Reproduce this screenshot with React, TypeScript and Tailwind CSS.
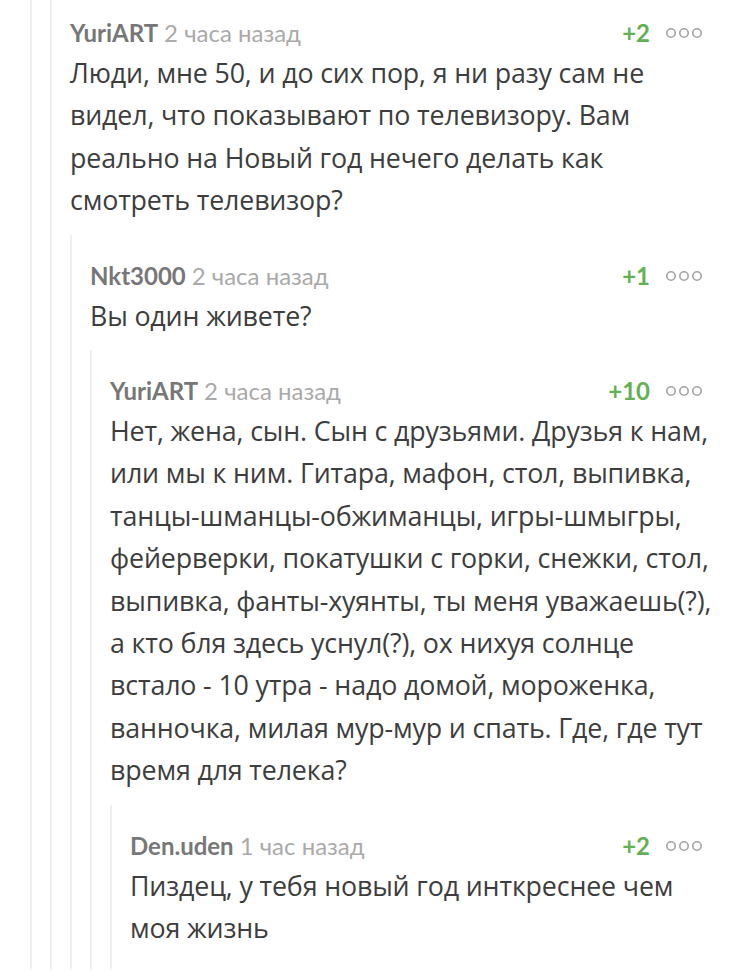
import React from "react";

interface CommentData {
    name: string;
    time: string;
    score: string;
    lines: string[];
    reply?: CommentData;
}

const thread: CommentData = {
    name: "YuriART",
    time: "2 часа назад",
    score: "+2",
    lines: [
        "Люди, мне 50, и до сих пор, я ни разу сам не",
        "видел, что показывают по телевизору. Вам",
        "реально на Новый год нечего делать как",
        "смотреть телевизор?",
    ],
    reply: {
        name: "Nkt3000",
        time: "2 часа назад",
        score: "+1",
        lines: ["Вы один живете?"],
        reply: {
            name: "YuriART",
            time: "2 часа назад",
            score: "+10",
            lines: [
                "Нет, жена, сын. Сын с друзьями. Друзья к нам,",
                "или мы к ним. Гитара, мафон, стол, выпивка,",
                "танцы-шманцы-обжиманцы, игры-шмыгры,",
                "фейерверки, покатушки с горки, снежки, стол,",
                "выпивка, фанты-хуянты, ты меня уважаешь(?),",
                "а кто бля здесь уснул(?), ох нихуя солнце",
                "встало - 10 утра - надо домой, мороженка,",
                "ванночка, милая мур-мур и спать. Где, где тут",
                "время для телека?",
            ],
            reply: {
                name: "Den.uden",
                time: "1 час назад",
                score: "+2",
                lines: ["Пиздец, у тебя новый год инткреснее чем", "моя жизнь"],
            },
        },
    },
};

function MoreDots() {
    return (
        <svg width="38" height="12" viewBox="0 0 38 12" fill="none" stroke="#a3a3a3" strokeWidth="1.6">
            <circle cx="5" cy="6" r="4.2" />
            <circle cx="18" cy="6" r="4.2" />
            <circle cx="31" cy="6" r="4.2" />
        </svg>
    );
}

function Comment({ data }: { data: CommentData }) {
    return (
        <div className={data.reply ? "" : "pb-[19px]"}>
            <div className="flex h-6 items-center justify-between">
                <div className="flex items-baseline gap-[6px] font-['Lato',sans-serif] text-[24px]">
                    <span className="font-bold text-[#777777]">{data.name}</span>
                    <span className="text-[#aaaaaa]">{data.time}</span>
                </div>
                <div className="flex items-center gap-[16px]">
                    <span className="font-['Lato',sans-serif] text-[24px] font-bold text-[#63b153]">{data.score}</span>
                    <MoreDots />
                </div>
            </div>
            <div className="mt-[7px] font-['Open_Sans',sans-serif] text-[26.8px] leading-[42.4px] tracking-[-0.15px] text-[#3d3d3d]">
                {data.lines.map((line, i) => (
                    <div key={i} className="whitespace-nowrap">
                        {line}
                    </div>
                ))}
            </div>
            {data.reply && (
                <div className="mt-[13px] border-l-2 border-[#efefef] pl-[18px] pt-[29px]">
                    <Comment data={data.reply} />
                </div>
            )}
        </div>
    );
}

export default function App() {
    return (
        <div className="min-h-[972px] w-[750px] bg-white pl-[30px] pr-[46px]">
            <div className="border-l-2 border-[#efefef] pl-[18px]">
                <div className="border-l-2 border-[#efefef] pl-[18px] pt-[21px]">
                    <Comment data={thread} />
                </div>
            </div>
        </div>
    );
}
